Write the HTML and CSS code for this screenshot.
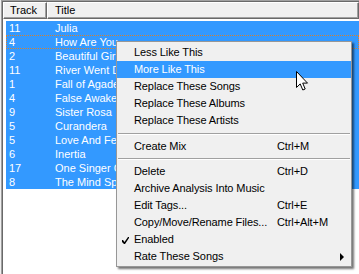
FILE: index.html
```html
<!DOCTYPE html>
<html>
<head>
<meta charset="utf-8">
<link rel="stylesheet" href="styles.css">
</head>
<body>
<div class="frame">
  <div class="inner">
    <div class="header">
      <div class="hcell h-track">Track</div>
      <div class="hcell h-title">Title</div>
    </div>
    <div class="list">
      <div class="row"><span class="c-track">11</span><span>Julia</span></div>
      <div class="row focus"><span class="c-track">4</span><span>How Are You</span></div>
      <div class="row"><span class="c-track">2</span><span>Beautiful Girl</span></div>
      <div class="row"><span class="c-track">11</span><span>River Went Down</span></div>
      <div class="row"><span class="c-track">1</span><span>Fall of Agade</span></div>
      <div class="row"><span class="c-track">4</span><span>False Awakening</span></div>
      <div class="row"><span class="c-track">9</span><span>Sister Rosa</span></div>
      <div class="row"><span class="c-track">5</span><span>Curandera</span></div>
      <div class="row"><span class="c-track">5</span><span>Love And Fear</span></div>
      <div class="row"><span class="c-track">6</span><span>Inertia</span></div>
      <div class="row"><span class="c-track">17</span><span>One Singer Cries</span></div>
      <div class="row"><span class="c-track">8</span><span>The Mind Speaks</span></div>
    </div>
  </div>
</div>

<div class="menu">
  <div class="item"><span>Less Like This</span></div>
  <div class="item active"><span>More Like This</span></div>
  <div class="item"><span>Replace These Songs</span></div>
  <div class="item"><span>Replace These Albums</span></div>
  <div class="item"><span>Replace These Artists</span></div>
  <div class="sep"></div>
  <div class="item"><span>Create Mix</span><span>Ctrl+M</span></div>
  <div class="sep sep2"></div>
  <div class="item"><span>Delete</span><span>Ctrl+D</span></div>
  <div class="item"><span>Archive Analysis Into Music</span></div>
  <div class="item"><span>Edit Tags...</span><span>Ctrl+E</span></div>
  <div class="item"><span>Copy/Move/Rename Files...</span><span>Ctrl+Alt+M</span></div>
  <div class="item checked">
    <svg class="check" width="7" height="7" viewBox="0 0 7 7"><path d="M0 3 L0 5 L2 7 L3 7 L7 1 L7 0 L6 0 L2.5 5 L1 3 Z" fill="#000"/></svg>
    <span>Enabled</span>
  </div>
  <div class="item sub"><span>Rate These Songs</span><span class="arrow"></span></div>
</div>

<svg class="cursor" width="13" height="21" viewBox="0 0 13 21">
  <path d="M0.5 0.5 L0.5 16.5 L4.2 12.9 L6.8 19 L9.2 18 L6.7 12.1 L11.5 12.1 Z" fill="#fff" stroke="#000" stroke-width="1" stroke-linejoin="miter"/>
</svg>
</body>
</html>
```

FILE: styles.css
```css
html, body {
  margin: 0;
  padding: 0;
}
body {
  width: 359px;
  height: 274px;
  overflow: hidden;
  background: #f0f0f0;
  font-family: "Liberation Sans", Arial, sans-serif;
  font-size: 11px;
  color: #000;
  position: relative;
}
.frame {
  margin-left: 1px;
  height: 274px;
  border-top: 1px solid #a0a0a0;
  border-left: 1px solid #a0a0a0;
  box-sizing: border-box;
}
.inner {
  height: 100%;
  border-top: 1px solid #696969;
  border-left: 1px solid #696969;
  background: #fff;
  box-sizing: border-box;
}
.header {
  display: flex;
  height: 17px;
  background: #f0f0f0;
}
.hcell {
  box-sizing: border-box;
  height: 17px;
  line-height: 15px;
  border-top: 1px solid #fff;
  border-left: 1px solid #fff;
  border-right: 1px solid #696969;
  border-bottom: 1px solid #696969;
  box-shadow: inset -1px -1px 0 #a0a0a0;
  background: #f0f0f0;
  white-space: nowrap;
}
.h-track {
  width: 44px;
  padding-left: 6px;
}
.h-title {
  flex: 1;
  padding-left: 7px;
}
.list {
  padding-top: 2px;
  padding-left: 3px;
}
.row {
  display: flex;
  height: 14px;
  line-height: 14px;
  background: #3399ff;
  color: #fff;
  padding-left: 3px;
  white-space: nowrap;
}
.row.focus {
  outline: 1px dotted #d8802c;
  outline-offset: -1px;
}
.c-track {
  width: 46px;
}
.menu {
  position: absolute;
  left: 116px;
  top: 41px;
  width: 236px;
  height: 226px;
  box-sizing: border-box;
  background: #f0f0f0;
  border: 1px solid #979797;
  padding: 2px 0 1px 0;
  box-shadow: 2px 2px 2px rgba(0, 0, 0, 0.55);
  letter-spacing: -0.1px;
}
.item {
  position: relative;
  display: grid;
  grid-template-columns: 143px 1fr;
  height: 17px;
  line-height: 17px;
  padding-left: 17px;
  white-space: nowrap;
}
.item.active {
  background: #3399ff;
  color: #fff;
}
.sep {
  height: 1px;
  background: #a0a0a0;
  border-bottom: 1px solid #fff;
  margin: 4px 1px 3px 1px;
}
.sep2 {
  margin: 3px 1px 3px 1px;
}
.check {
  position: absolute;
  left: 5px;
  top: 6px;
}
.arrow {
  position: absolute;
  left: 223px;
  top: 5px;
  width: 0;
  height: 0;
  border-top: 4px solid transparent;
  border-bottom: 4px solid transparent;
  border-left: 4px solid #000;
}
.cursor {
  position: absolute;
  left: 296px;
  top: 71px;
}
```
